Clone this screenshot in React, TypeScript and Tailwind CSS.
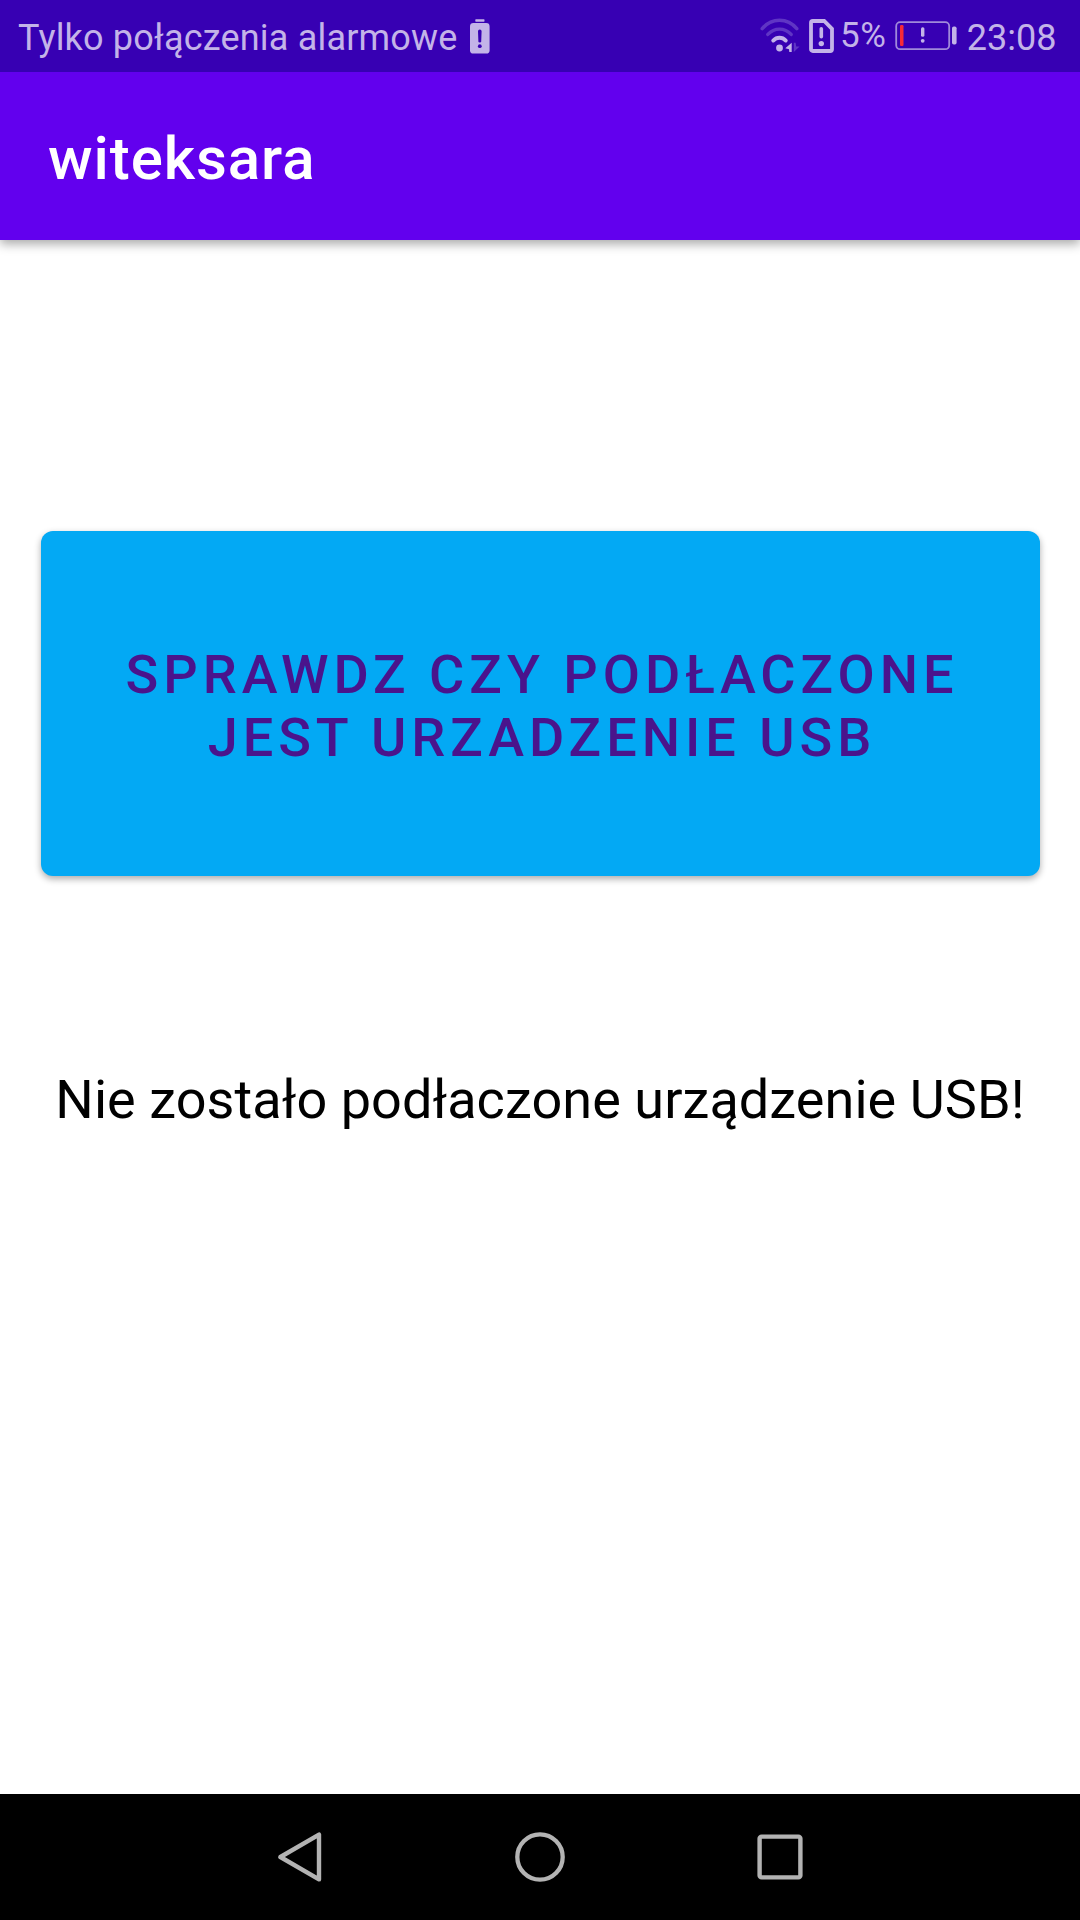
function BatteryAlert() {
  return (
    <svg width="20" height="36" viewBox="0 0 20 36" className="ml-[12px] shrink-0">
      <rect x="5.3" y="1.3" width="9.2" height="2.4" rx="0.6" fill="#c3b3e8" />
      <rect x="0" y="5" width="19.6" height="30.6" rx="3.4" fill="#c3b3e8" />
      <path d="M8 13.200q0-1.600 1.800-1.600t1.800 1.600l-.4 10.600q0 .7-1.400.7t-1.400-.7z" fill="#3700b3" />
      <circle cx="9.8" cy="28.2" r="1.9" fill="#3700b3" />
    </svg>
  );
}

function Wifi() {
  return (
    <svg width="40" height="36" viewBox="0 0 40 36" fill="none" strokeLinecap="round">
      <path d="M2.2 10.6C11.5-.6 27.5-.6 36.8 10.6" stroke="#5f35c4" strokeWidth="3.4" />
      <path d="M7.8 16.4C14.5 9.400 24.500 9.400 31.200 16.400" stroke="#5f35c4" strokeWidth="3.400" />
      <path d="M13.200 22.600C16.800 18.800 22.200 18.800 25.800 22.600" stroke="#c3b3e8" strokeWidth="3.800" />
      <circle cx="19.500" cy="30" r="3.400" fill="#c3b3e8" />
      <path d="M25.300 30.200L31.700 24.800V34H29.300L29 31.300z" fill="#c3b3e8" />
      <path d="M33.800 34V24.800H35.600L36.200 28.400H39.600z" fill="#5f35c4" />
    </svg>
  );
}

function SimAlert() {
  return (
    <svg width="25" height="36" viewBox="0 0 25 36" fill="none" className="ml-[9px]">
      <path d="M3.800 3h11.400L23 10.800v20.400a1.800 1.800 0 0 1-1.800 1.800H3.800A1.800 1.800 0 0 1 2 31.200V4.800A1.800 1.800 0 0 1 3.800 3z" stroke="#c3b3e8" strokeWidth="3.800" />
      <path d="M12.300 10.800v8" stroke="#c3b3e8" strokeWidth="3.600" strokeLinecap="round" />
      <circle cx="12.300" cy="25.600" r="2.700" fill="#c3b3e8" />
    </svg>
  );
}

function Battery() {
  return (
    <svg width="62" height="36" viewBox="0 0 62 36" fill="none">
      <rect x="1.200" y="4.200" width="53" height="27" rx="4" stroke="#a08ada" strokeWidth="1.800" />
      <rect x="5" y="7" width="3.500" height="21" rx="1.200" fill="#f82a36" />
      <rect x="26" y="9.300" width="3.400" height="9.400" rx="1.500" fill="#c3b3e8" />
      <circle cx="27.700" cy="22.800" r="1.900" fill="#c3b3e8" />
      <rect x="57" y="8.500" width="4.600" height="18" rx="1.800" fill="#c3b3e8" />
    </svg>
  );
}

export default function App() {
  return (
    <div className="flex h-[1920px] w-[1080px] flex-col bg-white font-['Roboto',sans-serif]">
      <div className="relative z-10 flex h-[72px] shrink-0 items-center bg-[#3700b3] pl-[18px] pr-[23.5px] text-[36px] text-[#c3b3e8]">
        <span className="whitespace-nowrap pt-1 tracking-[0.19px]">Tylko połączenia alarmowe</span>
        <BatteryAlert />
        <div className="ml-auto flex items-center">
          <Wifi />
          <SimAlert />
          <span className="ml-[6px] w-[55px] text-[35px] leading-[50px] tracking-[0.5px]">5%</span>
          <Battery />
          <span className="ml-[9.5px] w-[90px] pt-1 text-right">23:08</span>
        </div>
      </div>
      <div className="flex h-[168px] shrink-0 items-center bg-[#6200ee] pl-12 pt-1.5 text-[60px] font-medium tracking-[0.95px] text-white shadow-[0_4px_10px_rgba(0,0,0,0.34)]">
        witeksara
      </div>
      <button className="ml-[41px] mt-[291px] flex h-[345px] w-[999px] shrink-0 items-center justify-center rounded-[12px] bg-[#03a9f4] pl-[3px] pt-[4px] text-center text-[54px] font-medium leading-[63px] tracking-[5px] text-[#4a148c] shadow-[0_3px_7px_rgba(0,0,0,0.33)]">
        <span>
          SPRAWDZ CZY PODŁACZONE
          <br />
          JEST URZADZENIE USB
        </span>
      </button>
      <p className="mt-[183px] text-center text-[54px] tracking-[0.07px] text-black">
        Nie zostało podłaczone urządzenie USB!
      </p>
      <div className="mt-auto flex h-[126px] items-center justify-center gap-[190px] bg-black">
        <svg width="50" height="50" viewBox="0 0 50 50" fill="none">
          <path d="M44 2.600V47.400L5.400 25z" stroke="#b3b3b3" strokeWidth="4.400" strokeLinejoin="round" />
        </svg>
        <svg width="50" height="50" viewBox="0 0 50 50" fill="none">
          <circle cx="25" cy="25" r="22.700" stroke="#b3b3b3" strokeWidth="4.300" />
        </svg>
        <svg width="50" height="50" viewBox="0 0 50 50" fill="none">
          <rect x="4.600" y="4.600" width="40.800" height="40.800" rx="2" stroke="#b3b3b3" strokeWidth="4.400" />
        </svg>
      </div>
    </div>
  );
}
